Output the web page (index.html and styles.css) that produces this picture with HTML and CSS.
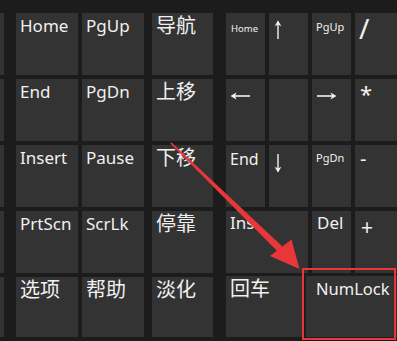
FILE: index.html
```html
<!DOCTYPE html>
<html lang="zh-CN">
<head>
<meta charset="utf-8">
<title>屏幕键盘</title>
<link rel="stylesheet" href="styles.css">
</head>
<body>
<div class="board">
  <div class="sec sec-a">
    <div class="key"></div>
    <div class="key"></div>
    <div class="key"></div>
    <div class="key"></div>
    <div class="key"></div>
  </div>
  <div class="sec sec-b">
    <div class="key">Home</div>
    <div class="key">PgUp</div>
    <div class="key zh d">导航</div>
    <div class="key">End</div>
    <div class="key">PgDn</div>
    <div class="key zh d">上移</div>
    <div class="key">Insert</div>
    <div class="key">Pause</div>
    <div class="key zh d">下移</div>
    <div class="key">PrtScn</div>
    <div class="key">ScrLk</div>
    <div class="key zh d">停靠</div>
    <div class="key zh">选项</div>
    <div class="key zh">帮助</div>
    <div class="key zh d">淡化</div>
  </div>
  <div class="sec sec-c">
    <div class="key sm">Home</div>
    <div class="key ico ico-up">
      <svg width="12" height="20" viewBox="0 0 12 20"><path d="M6 1.5V19" stroke="#f2f2f2" stroke-width="1.4" fill="none"/><path d="M6 0.5L2.6 6.2L6 4.6L9.4 6.2Z" fill="#f2f2f2"/></svg>
    </div>
    <div class="key pg">PgUp</div>
    <div class="key sym slash">/</div>

    <div class="key ico ico-h">
      <svg width="21" height="10" viewBox="0 0 21 10"><path d="M2 5H20" stroke="#f2f2f2" stroke-width="1.6" fill="none"/><path d="M0.5 5L6.5 1.6L5 5L6.5 8.4Z" fill="#f2f2f2"/></svg>
    </div>
    <div class="key"></div>
    <div class="key ico ico-h">
      <svg width="21" height="10" viewBox="0 0 21 10"><path d="M1 5H19" stroke="#f2f2f2" stroke-width="1.6" fill="none"/><path d="M20.5 5L14.5 1.6L16 5L14.5 8.4Z" fill="#f2f2f2"/></svg>
    </div>
    <div class="key sym star">*</div>

    <div class="key mid">End</div>
    <div class="key ico ico-down">
      <svg width="12" height="20" viewBox="0 0 12 20"><path d="M6 1V18.5" stroke="#f2f2f2" stroke-width="1.4" fill="none"/><path d="M6 19.5L2.6 13.8L6 15.4L9.4 13.8Z" fill="#f2f2f2"/></svg>
    </div>
    <div class="key pg pg-dn">PgDn</div>
    <div class="key sym minus">-</div>

    <div class="key wide ins">Ins</div>
    <div class="key del">Del</div>
    <div class="key sym plus">+</div>

    <div class="split">
      <div class="key zh enter">回车</div>
      <div class="key numlock">NumLock</div>
    </div>
  </div>

  <div class="mark"></div>
  <svg class="pointer" width="397" height="341" viewBox="0 0 397 341">
    <polygon points="171.6,142.4 170.4,143.6 277.6,251.4 282.4,246.6" fill="#e8363a"/>
    <polygon points="299.5,269 270,256 291.5,239.5" fill="#e8363a"/>
  </svg>
</div>
</body>
</html>
```

FILE: styles.css
```css
html, body {
  margin: 0;
  padding: 0;
  background: #1c1c1c;
}

.board {
  position: relative;
  width: 397px;
  height: 341px;
  box-sizing: border-box;
  padding-top: 13px;
  display: flex;
  column-gap: 12px;
  overflow: hidden;
  background: #1c1c1c;
}

.sec {
  display: grid;
  grid-template-rows: 62px 62px 62px 62px 60px;
  row-gap: 4px;
  column-gap: 4px;
  flex: none;
}

.sec-a {
  grid-template-columns: 4px;
}

.sec-b {
  grid-template-columns: 62px 62px 65px;
}

.sec-b .d {
  margin-left: 4px;
}

.sec-c {
  margin-left: 1px;
  grid-template-columns: 39px 39px 39px 42px;
}

.key {
  background: #333333;
  color: #f0f0f0;
  font-family: "Noto Sans", "Open Sans", sans-serif;
  font-size: 17px;
  line-height: 1;
  padding: 4px 0 0 4px;
  box-sizing: border-box;
  white-space: nowrap;
}

.zh {
  font-family: "Noto Sans CJK SC", "Noto Sans", sans-serif;
  font-size: 20px;
  padding-top: 2px;
  padding-left: 4px;
}

.sm {
  font-size: 9.5px;
  padding: 11px 0 0 5px;
}

.pg {
  font-size: 11px;
  padding: 8px 0 0 4px;
}

.pg-dn {
  padding-top: 7px;
}

.mid {
  font-size: 16px;
  padding: 6px 0 0 4px;
}

.ico svg {
  display: block;
}

.ico-up {
  padding: 7px 0 0 3px;
}

.ico-down {
  padding: 8px 0 0 3px;
}

.ico-h {
  padding: 12px 0 0 4px;
}

.sym {
  padding-left: 5px;
}

.slash {
  font-size: 28px;
  padding-top: 1px;
  padding-left: 4px;
}

.star {
  font-size: 22px;
  padding-top: 3px;
}

.minus {
  font-size: 20px;
  padding-top: 4px;
}

.plus {
  font-size: 21px;
  padding-top: 6px;
  padding-left: 6px;
}

.wide {
  grid-column: span 2;
}

.ins {
  padding-top: 3px;
}

.del {
  padding: 3px 0 0 5px;
}

.split {
  grid-column: 1 / -1;
  display: flex;
  column-gap: 4px;
  margin-top: -1px;
}

.enter {
  width: 76px;
  flex: none;
}

.numlock {
  flex: 1;
  font-size: 16.5px;
  padding: 5px 0 0 10px;
}

.mark {
  position: absolute;
  left: 302px;
  top: 268px;
  width: 94px;
  height: 72px;
  box-sizing: border-box;
  border: 2px solid #e8363a;
}

.pointer {
  position: absolute;
  left: 0;
  top: 0;
  pointer-events: none;
}
```
